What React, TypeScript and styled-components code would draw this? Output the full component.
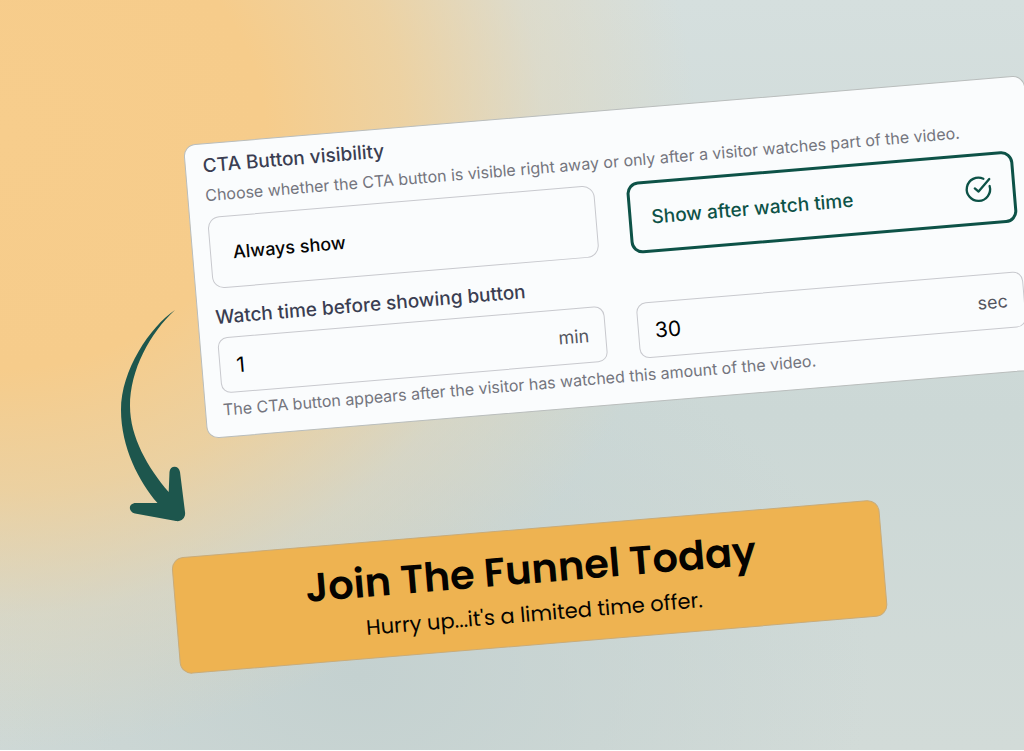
import React, { useState } from "react";
import styled, { createGlobalStyle, css } from "styled-components";
import { CircleCheckBig } from "lucide-react";

const GlobalStyle = createGlobalStyle`
  *, *::before, *::after { box-sizing: border-box; }
  body {
    margin: 0;
    background: #ffffff;
    font-family: Inter, "Liberation Sans", sans-serif;
  }
`;

const color = {
  green: "#0d5247",
  arrow: "#1d564d",
  heading: "#3a3e52",
  muted: "#74757e",
  unit: "#54565f",
  line: "#c8c9ce",
  panel: "#fafcfd",
  amber: "#eeb351",
};

const tilted = css`
  transform: rotate(-4.75deg);
  transform-origin: top left;
`;

const Scene = styled.main`
  position: relative;
  display: flex;
  flex-direction: column;
  gap: 118px;
  min-height: calc(100vh - 1px);
  padding: 145px 0 75px;
  overflow: hidden;
  background:
    radial-gradient(ellipse 68% 82% at 0% 18%, #f7cd8c 0%, #f6cc8b 38%, rgba(243, 207, 148, 0.8) 58%, rgba(232, 214, 178, 0.42) 78%, rgba(214, 218, 208, 0) 100%),
    radial-gradient(ellipse 50% 50% at 35% 90%, #c4d1d0 0%, rgba(196, 209, 208, 0) 100%),
    linear-gradient(180deg, #d5dfde 0%, #ccd8d6 55%, #d2dbd8 100%);
`;

const Panel = styled.form`
  ${tilted}
  display: flex;
  flex-direction: column;
  gap: 15px;
  margin: 0 -3px 0 183px;
  padding: 8px 17px 13px;
  border: 1px solid #b9bdbc;
  border-radius: 12px;
  background: ${color.panel};
`;

const Group = styled.fieldset`
  display: flex;
  flex-direction: column;
  min-width: 0;
  margin: 0;
  padding: 0;
  border: 0;
`;

const Heading = styled.legend`
  margin-bottom: 1px;
  padding: 0;
  font-size: 19px;
  font-weight: 500;
  line-height: 28px;
  color: ${color.heading};
`;

const Hint = styled.p`
  margin: 0;
  font-size: 16px;
  line-height: 28px;
  color: ${color.muted};
  white-space: nowrap;
`;

const Columns = styled.div<{ $top: number; $bottom?: number }>`
  display: grid;
  grid-template-columns: repeat(2, minmax(0, 1fr));
  gap: 32px;
  margin-top: ${(p) => p.$top}px;
  margin-bottom: ${(p) => p.$bottom ?? 0}px;
`;

const Option = styled.label<{ $active: boolean }>`
  display: flex;
  align-items: center;
  justify-content: space-between;
  height: 72px;
  padding: 0 ${(p) => (p.$active ? 20 : 22)}px;
  border-radius: 12px;
  font-size: ${(p) => (p.$active ? 19 : 18)}px;
  font-weight: 500;
  cursor: pointer;
  border: ${(p) => (p.$active ? `3px solid ${color.green}` : `1px solid ${color.line}`)};
  color: ${(p) => (p.$active ? color.green : "#050505")};
`;

const HiddenRadio = styled.input`
  position: absolute;
  opacity: 0;
  pointer-events: none;
`;

const Field = styled.label`
  display: flex;
  align-items: center;
  height: 56px;
  padding: 2px 16px 0;
  border: 1px solid ${color.line};
  border-radius: 10px;
`;

const NumberInput = styled.input`
  flex: 1;
  min-width: 0;
  padding: 0;
  border: 0;
  outline: 0;
  background: transparent;
  font: 400 21px/28px Inter, "Liberation Sans", sans-serif;
  color: #000000;
`;

const Unit = styled.span`
  font-size: 18px;
  line-height: 28px;
  color: ${color.unit};
`;

const CallToAction = styled.button`
  ${tilted}
  display: flex;
  flex-direction: column;
  align-items: center;
  gap: 3px;
  margin: 0 143px 0 171px;
  padding: 14px 0 14px 5px;
  border: 1px solid #c9ab78;
  border-radius: 12px;
  background: ${color.amber};
  color: #050300;
  font-family: Poppins, Inter, "Liberation Sans", sans-serif;
  cursor: pointer;
`;

const CtaTitle = styled.span`
  font-size: 40px;
  font-weight: 600;
  line-height: 52px;
`;

const CtaText = styled.span`
  font-size: 21px;
  line-height: 32px;
`;

const Arrow = styled.svg`
  position: absolute;
  left: 120px;
  top: 305px;
  fill: ${color.arrow};
`;

const options = [
  { id: "always", label: "Always show" },
  { id: "after", label: "Show after watch time" },
];

export default function App() {
  const [mode, setMode] = useState("after");

  return (
    <>
      <GlobalStyle />
      <Scene>
        <Panel>
          <Group>
            <Heading>CTA Button visibility</Heading>
            <Hint>
              Choose whether the CTA button is visible right away or only after a visitor watches part of the video.
            </Hint>
            <Columns $top={8}>
              {options.map((o) => (
                <Option key={o.id} $active={mode === o.id}>
                  <HiddenRadio
                    type="radio"
                    name="visibility"
                    checked={mode === o.id}
                    onChange={() => setMode(o.id)}
                  />
                  {o.label}
                  {mode === o.id && <CircleCheckBig size={28} strokeWidth={2} aria-hidden="true" />}
                </Option>
              ))}
            </Columns>
          </Group>
          <Group>
            <Heading>Watch time before showing button</Heading>
            <Columns $top={5} $bottom={2}>
              <Field>
                <NumberInput inputMode="numeric" defaultValue="1" />
                <Unit>min</Unit>
              </Field>
              <Field>
                <NumberInput inputMode="numeric" defaultValue="30" />
                <Unit>sec</Unit>
              </Field>
            </Columns>
            <Hint>The CTA button appears after the visitor has watched this amount of the video.</Hint>
          </Group>
        </Panel>

        <CallToAction type="button">
          <CtaTitle>Join The Funnel Today</CtaTitle>
          <CtaText>Hurry up...it's a limited time offer.</CtaText>
        </CallToAction>

        <Arrow width="70" height="220" viewBox="0 0 70 220" aria-hidden="true">
          <path d="M55 5C30 22 1 65 1 105C1 142 19 177 37.500 198L16 198C8 198 8 207 15 208.500L56 216C61 217 66 213 65 207L60 167C59 160 50 160 49.500 167L48.700 187C28 163 10 132 10 101C10 65 30 28 55 5Z" />
        </Arrow>
      </Scene>
    </>
  );
}
